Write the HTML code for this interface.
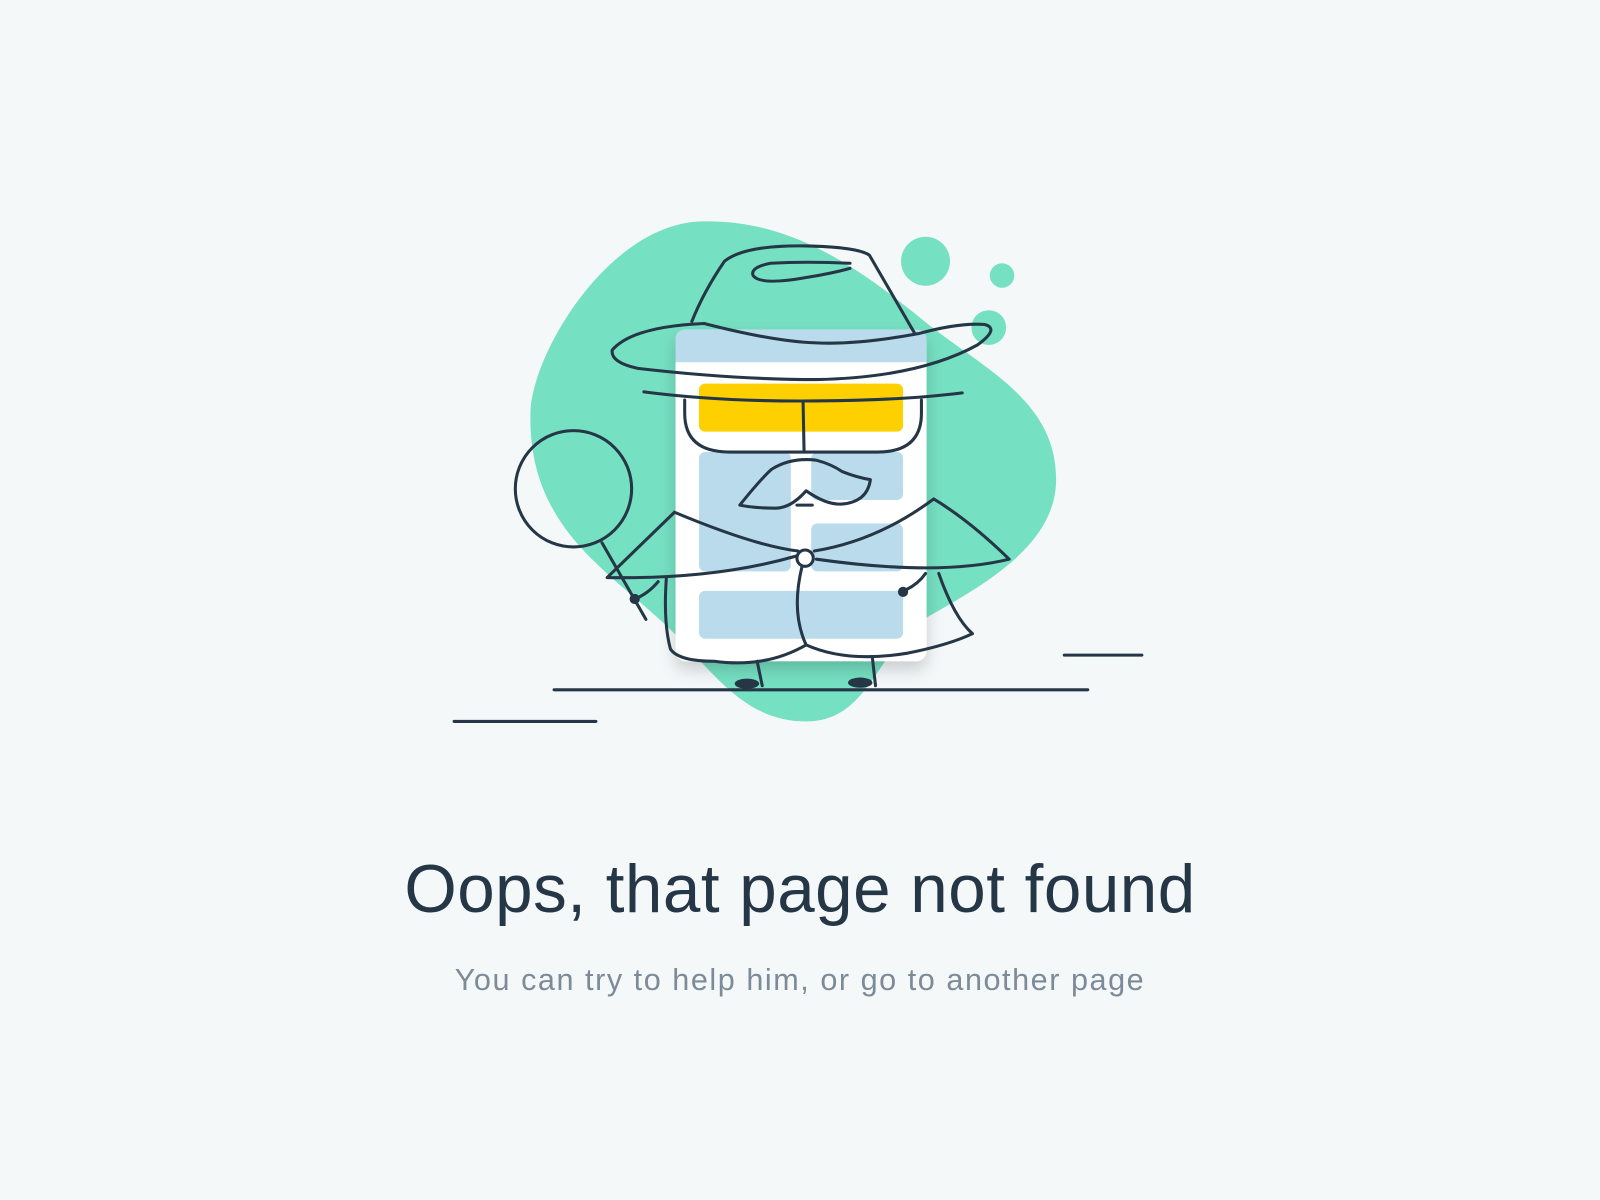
<!DOCTYPE html>
<html><head><meta charset="utf-8"><style>
html,body{margin:0;padding:0;background:#f4f8f9;width:1600px;height:1200px;overflow:hidden}
svg{position:absolute;left:0;top:0}
</style></head><body>
<svg width="1600" height="1200" viewBox="0 0 1568 1176">
<defs><filter id="sh" x="-20%" y="-20%" width="140%" height="140%"><feDropShadow dx="0" dy="8" stdDeviation="8" flood-color="#000" flood-opacity="0.18"/></filter></defs>
<path fill="#76e0c2" d="M690 217 C780 215 850 270 900 310 C960 360 1035 390 1035 470 C1035 540 950 580 900 610 C860 640 850 707 790 707 C730 707 700 660 660 620 C600 560 515 520 520 400 C525 340 600 217 690 217 Z"/>
<circle cx="907" cy="256" r="24" fill="#76e0c2"/>
<circle cx="982" cy="270" r="12" fill="#76e0c2"/>
<circle cx="969" cy="321" r="17" fill="#76e0c2"/>
<rect x="662" y="323" width="246" height="325" rx="10" fill="#fff" filter="url(#sh)"/>
<path d="M672 323 H898 Q908 323 908 333 V355 H662 V333 Q662 323 672 323Z" fill="#b9dbec"/>
<rect x="685" y="376" width="200" height="47" rx="6" fill="#ffd000"/>
<rect x="685" y="443" width="90" height="117" rx="6" fill="#b9dbec"/>
<rect x="795" y="443" width="90" height="47" rx="6" fill="#b9dbec"/>
<rect x="795" y="513" width="90" height="47" rx="6" fill="#b9dbec"/>
<rect x="685" y="579" width="200" height="47" rx="6" fill="#b9dbec"/>
<g fill="none" stroke="#253746" stroke-width="3" stroke-linecap="round" stroke-linejoin="round">
<path d="M543 676 H1066"/><path d="M445 707 H584"/><path d="M1043 642 H1119"/>
<path d="M678 315 Q690 285 710 256 Q730 240 790 241 Q840 242 852 250 L896 326"/>
<path d="M833 258 Q790 256 755 258 Q735 262 738 270 Q745 280 790 272 Q815 268 833 263"/>
<path d="M690 317 Q620 320 600 343 Q598 355 625 361 Q720 372 800 372 Q900 370 958 338 Q980 322 965 318 Q940 316 900 327 Q840 338 800 336 Q760 335 690 317"/>
<path d="M631 384 Q700 393 785 393 Q880 393 943 385"/>
<path d="M671 392 V405 Q671 443 715 443 H860 Q903 443 903 405 V392"/>
<path d="M787 393 L788 443"/>
<path d="M725 495 Q745 470 756 460 Q775 448 800 451 Q815 455 825 462 Q840 468 853 470 Q850 492 825 494 Q810 495 790 481 Q775 498 760 498 Q740 498 725 495Z"/>
<path d="M781 495 H796"/>
<circle cx="562" cy="479" r="57"/>
<path d="M590 532 L633 607"/>
<path d="M661 502 L595 566 Q700 568 780 545 M661 502 Q740 535 782 540 M798 540 Q860 530 915 489 Q950 510 989 548 Q920 565 800 548"/>
<circle cx="789" cy="547" r="8" fill="#fff"/>
<path d="M786 555 Q775 600 790 632 Q750 655 700 648 Q665 648 657 636 Q650 610 653 567"/>
<path d="M790 632 Q830 650 890 640 Q930 632 953 621 Q935 605 920 562"/>
<path d="M907 562 Q900 572 888 578"/>
<path d="M645 570 Q635 582 622 587"/>
<path d="M742 648 L747 672"/><path d="M855 645 L858 672"/>
</g>
<g fill="#253746">
<ellipse cx="732" cy="670" rx="12" ry="5"/><ellipse cx="843" cy="669" rx="12" ry="5"/>
<circle cx="622" cy="587" r="5"/><circle cx="885" cy="580" r="5"/>
</g>
<text x="784" y="894" text-anchor="middle" font-family="Liberation Sans, sans-serif" font-size="66" fill="#253746" letter-spacing="0.5">Oops, that page not found</text>
<text x="784" y="970" text-anchor="middle" font-family="Liberation Sans, sans-serif" font-size="30" fill="#7d8b98" letter-spacing="1.5">You can try to help him, or go to another page</text>
</svg>
</body></html>
